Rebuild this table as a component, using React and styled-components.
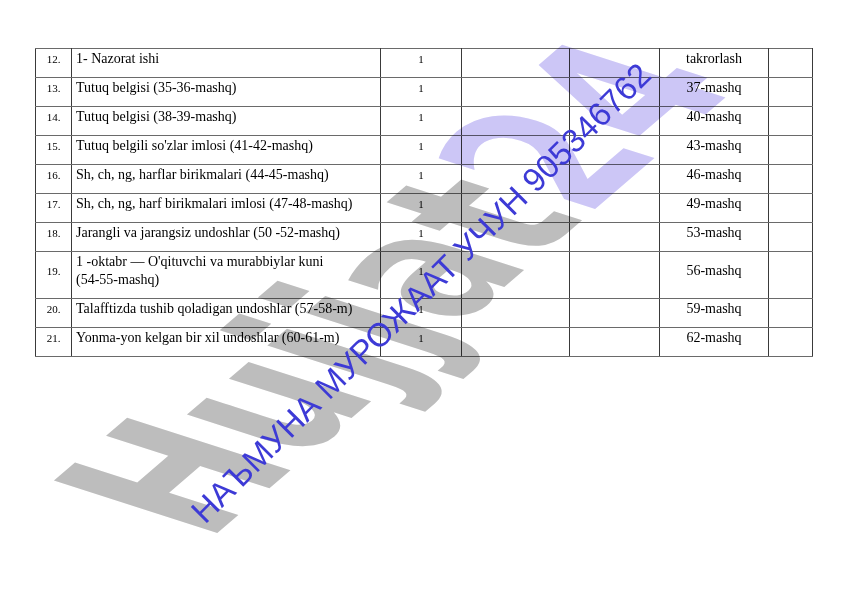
import React from 'react';
import styled, { createGlobalStyle } from 'styled-components';

const GlobalStyle = createGlobalStyle`
  html, body {
    margin: 0;
    padding: 0;
    background: #fff;
  }
  body {
    width: 842px;
    height: 596px;
    overflow: hidden;
    font-family: "Liberation Serif", "Times New Roman", serif;
    color: #000;
  }
`;

const Page = styled.div`
  position: relative;
  width: 842px;
  height: 596px;
  box-sizing: border-box;
  padding: 48px 30px 0 35px;
  overflow: hidden;
`;

const Table = styled.table`
  width: 777px;
  border-collapse: collapse;
  table-layout: fixed;
`;

const Cell = styled.td`
  border: 1px solid #3a3a3a;
  border-top-color: #6a6a6a;
  border-bottom-color: #6a6a6a;
  padding: 1px 5px 9px;
  font-size: ${(p) => (p.$small ? '11px' : '14px')};
  line-height: 18px;
  vertical-align: middle;
  text-align: ${(p) => p.$align || 'left'};
  overflow: hidden;
`;

const TopicCell = styled(Cell)`
  padding: 1px 6px 9px 4px;
`;

const NoBreak = styled.span`
  white-space: nowrap;
`;

// watermark layer, lies over the table
const Watermark = styled.div`
  position: absolute;
  inset: 0;
  pointer-events: none;
`;

const BigMark = styled.div`
  position: absolute;
  left: 18px;
  top: 481px;
  font-family: "DejaVu Sans", sans-serif;
  font-weight: 700;
  font-size: 160px;
  line-height: 160px;
  white-space: nowrap;
  transform-origin: 0 0;
  transform: matrix(0.7, -0.6, 1.4, 0.45, 0, 0);
  mix-blend-mode: multiply;
`;

const Gray = styled.span`
  color: #bdbdbd;
`;

const Lilac = styled.span`
  color: #ccc6f6;
`;

const Stamp = styled.div`
  position: absolute;
  left: 205px;
  top: 497px;
  font-family: "Liberation Sans", Arial, sans-serif;
  font-size: 33px;
  line-height: 33px;
  color: #3d3ad6;
  white-space: nowrap;
  transform-origin: 0 28px;
  transform: rotate(-45deg);
`;

const rows = [
  ['12.', '1- Nazorat ishi', 'takrorlash'],
  ['13.', 'Tutuq belgisi (35-36-mashq)', '37-mashq'],
  ['14.', 'Tutuq belgisi (38-39-mashq)', '40-mashq'],
  ['15.', "Tutuq belgili so'zlar imlosi (41-42-mashq)", '43-mashq'],
  ['16.', 'Sh, ch, ng, harflar birikmalari (44-45-mashq)', '46-mashq'],
  ['17.', 'Sh, ch, ng, harf birikmalari imlosi (47-48-mashq)', '49-mashq'],
  ['18.', 'Jarangli va jarangsiz undoshlar (50 -52-mashq)', '53-mashq'],
  ['19.', "1 -oktabr — O'qituvchi va murabbiylar kuni (54-55-mashq)", '56-mashq'],
  ['20.', 'Talafftizda tushib qoladigan undoshlar (57-58-m)', '59-mashq'],
  ['21.', 'Yonma-yon kelgan bir xil undoshlar (60-61-m)', '62-mashq'],
];

const widths = [36, 309, 81, 108, 90, 109, 44];

// keep the bracketed exercise range on one line, as the document does
function Topic({ text }) {
  const parts = text.split(/(\([^)]*\))/);
  return parts.map((part, i) =>
    part.startsWith('(') ? <NoBreak key={i}>{part}</NoBreak> : part
  );
}

export default function App() {
  return (
    <Page>
      <GlobalStyle />
      <Table>
        <colgroup>
          {widths.map((w, i) => (
            <col key={i} style={{ width: w }} />
          ))}
        </colgroup>
        <tbody>
          {rows.map(([num, topic, task]) => (
            <tr key={num}>
              <Cell $small $align="center">{num}</Cell>
              <TopicCell>
                <Topic text={topic} />
              </TopicCell>
              <Cell $small $align="center">1</Cell>
              <Cell />
              <Cell />
              <Cell $align="center">{task}</Cell>
              <Cell />
            </tr>
          ))}
        </tbody>
      </Table>
      <Watermark>
        <BigMark>
          <Gray>Hujjat</Gray>
          <Lilac>24</Lilac>
        </BigMark>
        <Stamp>НАЪМУНА МУРОЖААТ УЧУН 905346762</Stamp>
      </Watermark>
    </Page>
  );
}
